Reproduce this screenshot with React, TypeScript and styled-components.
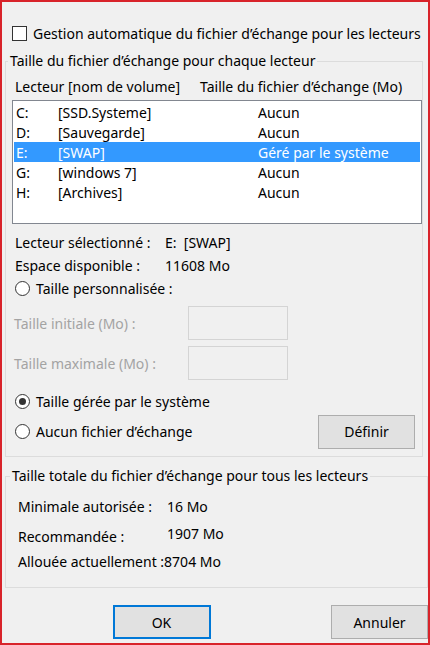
import styled, { createGlobalStyle } from "styled-components";

const GlobalStyle = createGlobalStyle`
  html, body {
    margin: 0;
    padding: 0;
    background: #ffffff;
  }
  body {
    font-family: "Noto Sans", "Liberation Sans", sans-serif;
    font-size: 14px;
    color: #000000;
  }
`;

type Drive = {
  letter: string;
  name: string;
  size: string;
};

const drives: Drive[] = [
  { letter: "C:", name: "[SSD.Systeme]", size: "Aucun" },
  { letter: "D:", name: "[Sauvegarde]", size: "Aucun" },
  { letter: "E:", name: "[SWAP]", size: "Géré par le système" },
  { letter: "G:", name: "[windows 7]", size: "Aucun" },
  { letter: "H:", name: "[Archives]", size: "Aucun" },
];

const Frame = styled.div`
  box-sizing: border-box;
  width: 430px;
  height: 645px;
  border: 2px solid #d8232a;
  background: #f0f0f0;
  display: flex;
  flex-direction: column;
  overflow: hidden;
`;

const CheckRow = styled.label`
  display: flex;
  align-items: center;
  height: 20px;
  margin-top: 21px;
  padding-left: 10px;
  gap: 6px;
`;

const CheckBox = styled.span`
  box-sizing: border-box;
  width: 15px;
  height: 15px;
  border: 1px solid #333333;
  background: #ffffff;
`;

const GroupBox = styled.div<{ $top: number; $right: number; $bottom: number }>`
  margin: ${(p) => p.$top}px ${(p) => p.$right}px 0 3px;
  border: 1px solid #dcdcdc;
  padding-bottom: ${(p) => p.$bottom}px;
  display: flex;
  flex-direction: column;
`;

const GroupTitle = styled.span<{ $left: number }>`
  display: block;
  width: fit-content;
  margin: -11px 0 0 ${(p) => p.$left}px;
  padding: 0 2px;
  line-height: 20px;
  background: #f0f0f0;
`;

const HeaderRow = styled.div`
  display: flex;
  height: 20px;
  align-items: center;
  margin-top: 5px;
  padding-left: 9px;
`;

const HeaderCell = styled.span<{ $width?: number }>`
  width: ${(p) => (p.$width ? `${p.$width}px` : "auto")};
  white-space: nowrap;
`;

const ListBox = styled.div`
  box-sizing: border-box;
  margin: 4px 0 0 6px;
  width: 410px;
  height: 124px;
  border: 1px solid #828790;
  background: #ffffff;
  padding: 1px;
`;

const ListRow = styled.div<{ $selected?: boolean }>`
  display: flex;
  align-items: center;
  height: 20px;
  padding-left: 2px;
  background: ${(p) => (p.$selected ? "#3399ff" : "transparent")};
  color: ${(p) => (p.$selected ? "#ffffff" : "#000000")};
`;

const ListCell = styled.span<{ $width?: number }>`
  width: ${(p) => (p.$width ? `${p.$width}px` : "auto")};
  white-space: nowrap;
`;

const InfoRow = styled.div<{ $top: number; $indent: number }>`
  display: flex;
  align-items: center;
  height: 20px;
  margin-top: ${(p) => p.$top}px;
  padding-left: ${(p) => p.$indent}px;
  white-space: nowrap;
`;

const InfoLabel = styled.span<{ $width: number }>`
  width: ${(p) => p.$width}px;
`;

const InfoValue = styled.span<{ $raised?: boolean }>`
  padding-bottom: ${(p) => (p.$raised ? "6px" : "0")};
`;

const RadioRow = styled.label<{ $top: number; $height?: number }>`
  display: flex;
  align-items: center;
  height: ${(p) => p.$height ?? 20}px;
  margin-top: ${(p) => p.$top}px;
  padding: 0 7px 0 9px;
  gap: 6px;
  white-space: nowrap;
`;

const Radio = styled.span<{ $checked?: boolean }>`
  box-sizing: border-box;
  width: 15px;
  height: 15px;
  border: 1px solid #333333;
  border-radius: 50%;
  background: #ffffff;
  display: flex;
  align-items: center;
  justify-content: center;
  &::after {
    content: "";
    width: 7px;
    height: 7px;
    border-radius: 50%;
    background: ${(p) => (p.$checked ? "#333333" : "transparent")};
  }
`;

const FieldRow = styled.div<{ $top: number }>`
  display: flex;
  align-items: center;
  height: 34px;
  margin-top: ${(p) => p.$top}px;
  padding-left: 8px;
  white-space: nowrap;
`;

const FieldLabel = styled.span`
  width: 174px;
  color: #a3a3a3;
`;

const FieldInput = styled.div`
  box-sizing: border-box;
  width: 100px;
  height: 34px;
  border: 1px solid #d4d4d4;
  background: #f0f0f0;
`;

const Button = styled.button<{ $primary?: boolean }>`
  box-sizing: border-box;
  width: ${(p) => (p.$primary ? 98 : 97)}px;
  height: 34px;
  margin-left: auto;
  font-family: inherit;
  font-size: 14px;
  color: #000000;
  background: #e1e1e1;
  border: ${(p) => (p.$primary ? "2px solid #0078d7" : "1px solid #adadad")};
  padding: 0;
`;

const ButtonBar = styled.div`
  display: flex;
  justify-content: flex-end;
  gap: 10px;
  margin-top: 17px;
`;

export default function App() {
  return (
    <>
      <GlobalStyle />
      <Frame>
        <CheckRow>
          <CheckBox />
          <span>Gestion automatique du fichier d’échange pour les lecteurs</span>
        </CheckRow>

        <GroupBox $top={18} $right={5} $bottom={8}>
          <GroupTitle $left={2}>Taille du fichier d’échange pour chaque lecteur</GroupTitle>
          <HeaderRow>
            <HeaderCell $width={185}>Lecteur [nom de volume]</HeaderCell>
            <HeaderCell>Taille du fichier d’échange (Mo)</HeaderCell>
          </HeaderRow>
          <ListBox>
            {drives.map((d) => (
              <ListRow key={d.letter} $selected={d.letter === "E:"}>
                <ListCell $width={42}>{d.letter}</ListCell>
                <ListCell $width={200}>{d.name}</ListCell>
                <ListCell>{d.size}</ListCell>
              </ListRow>
            ))}
          </ListBox>

          <InfoRow $top={8} $indent={9}>
            <InfoLabel $width={150}>Lecteur sélectionné :</InfoLabel>
            <InfoValue>E:&nbsp;&nbsp;[SWAP]</InfoValue>
          </InfoRow>
          <InfoRow $top={3} $indent={9}>
            <InfoLabel $width={150}>Espace disponible :</InfoLabel>
            <InfoValue>11608 Mo</InfoValue>
          </InfoRow>
          <RadioRow $top={3}>
            <Radio />
            <span>Taille personnalisée :</span>
          </RadioRow>

          <FieldRow $top={8}>
            <FieldLabel>Taille initiale (Mo) :</FieldLabel>
            <FieldInput />
          </FieldRow>
          <FieldRow $top={6}>
            <FieldLabel>Taille maximale (Mo) :</FieldLabel>
            <FieldInput />
          </FieldRow>

          <RadioRow $top={11}>
            <Radio $checked />
            <span>Taille gérée par le système</span>
          </RadioRow>
          <RadioRow $top={4} $height={33}>
            <Radio />
            <span>Aucun fichier d’échange</span>
            <Button>Définir</Button>
          </RadioRow>
        </GroupBox>

        <GroupBox $top={19} $right={0} $bottom={16}>
          <GroupTitle $left={4}>Taille totale du fichier d’échange pour tous les lecteurs</GroupTitle>
          <InfoRow $top={10} $indent={12}>
            <InfoLabel $width={149}>Minimale autorisée :</InfoLabel>
            <InfoValue>16 Mo</InfoValue>
          </InfoRow>
          <InfoRow $top={10} $indent={12}>
            <InfoLabel $width={149}>Recommandée :</InfoLabel>
            <InfoValue $raised>1907 Mo</InfoValue>
          </InfoRow>
          <InfoRow $top={5} $indent={12}>
            <span>Allouée actuellement :8704 Mo</span>
          </InfoRow>
        </GroupBox>

        <ButtonBar>
          <Button $primary>OK</Button>
          <Button>Annuler</Button>
        </ButtonBar>
      </Frame>
    </>
  );
}
